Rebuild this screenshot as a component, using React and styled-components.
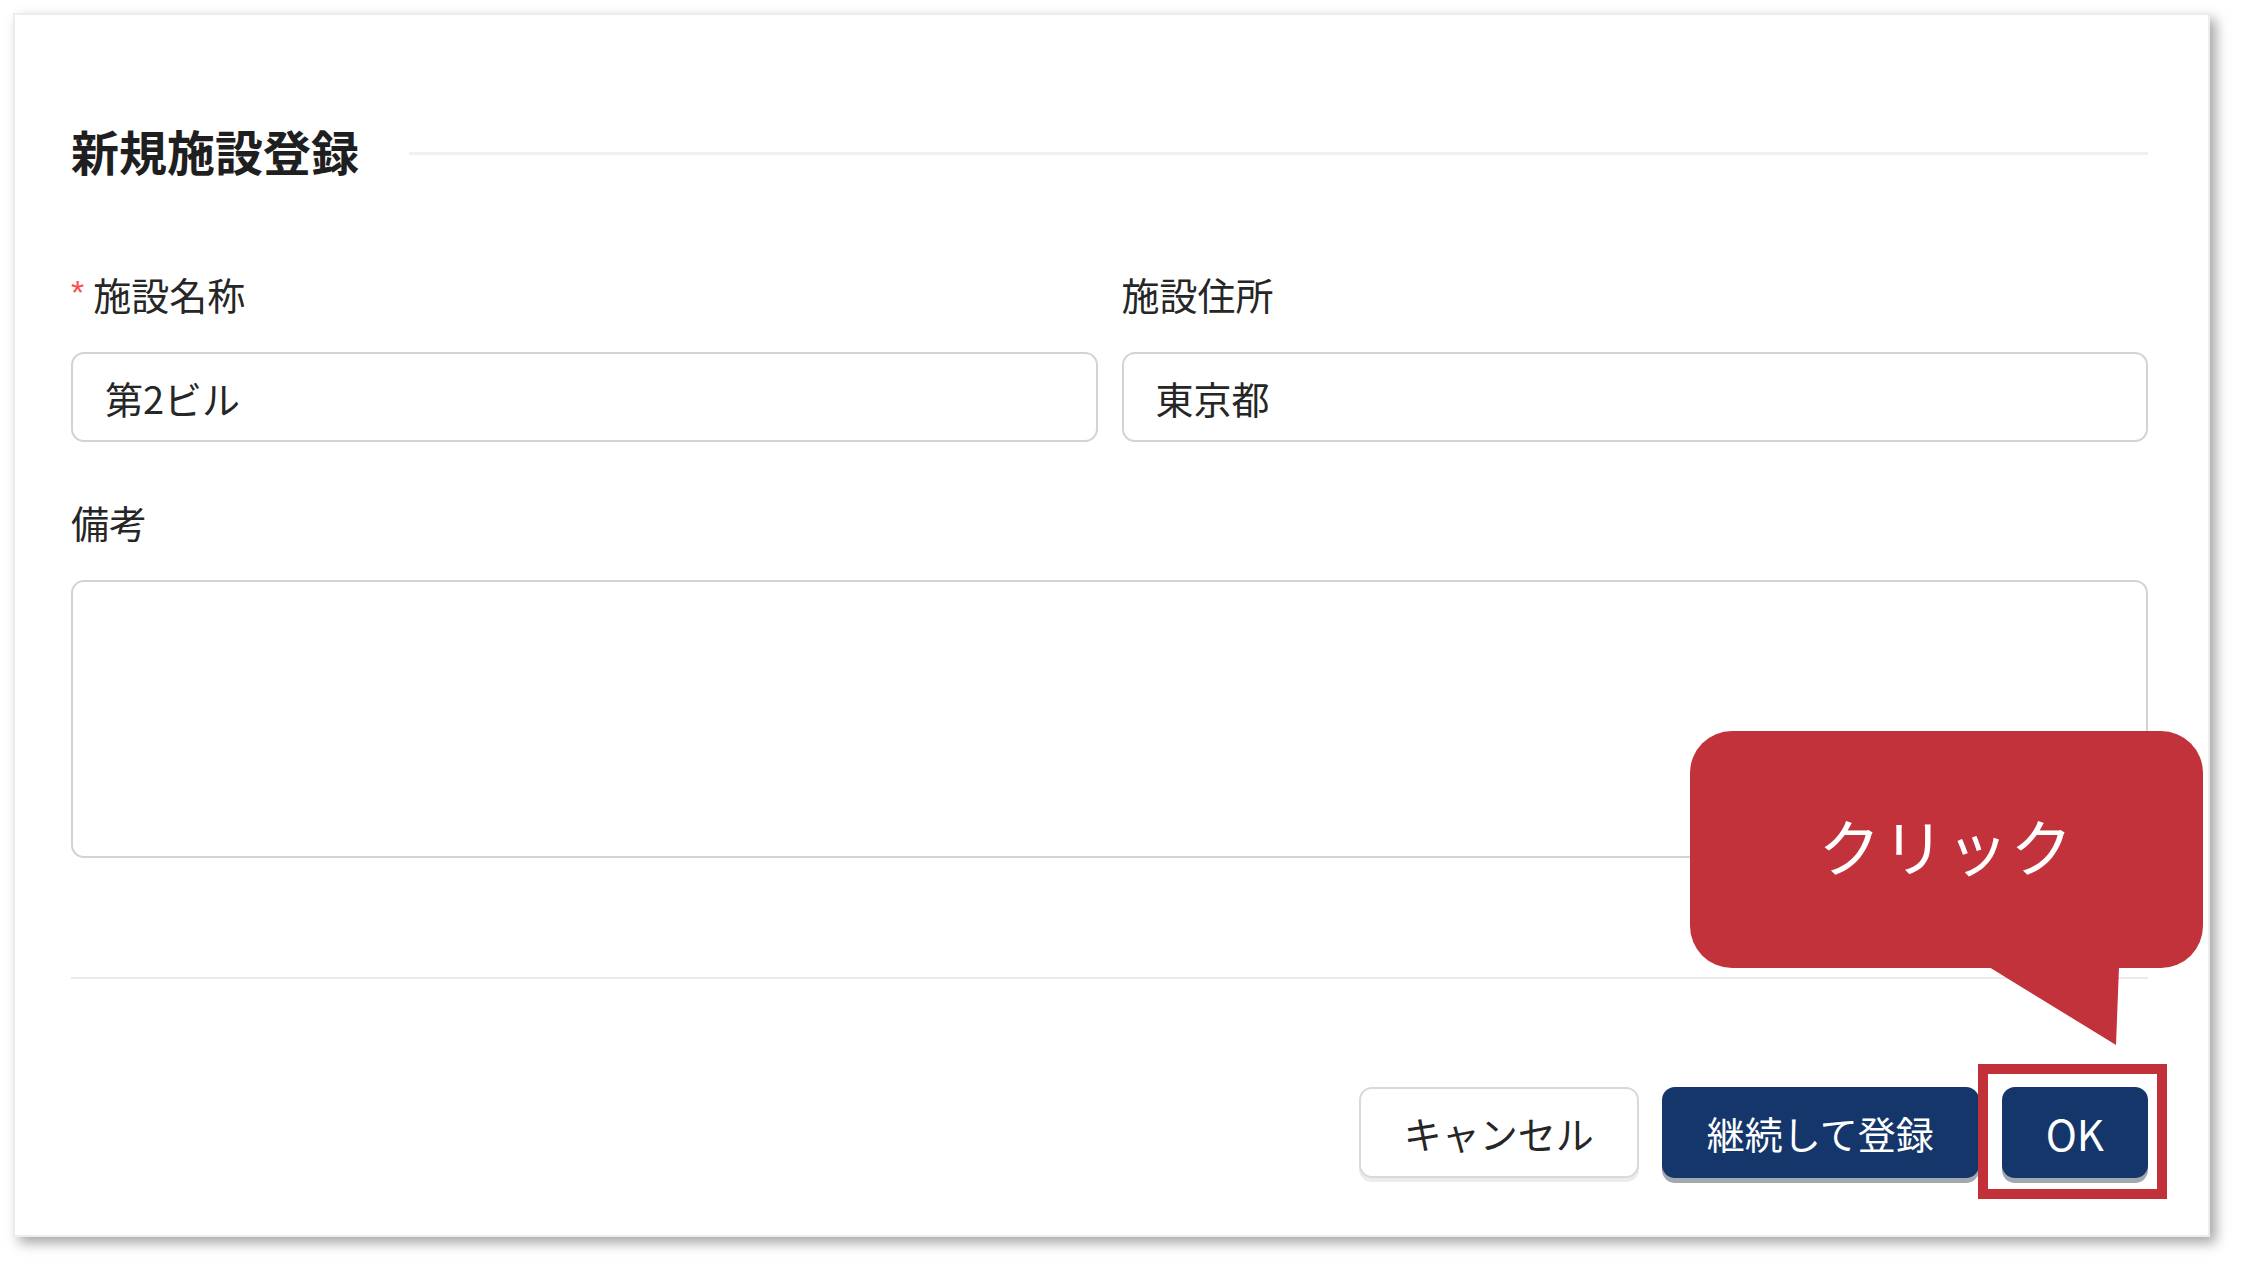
import styled, { createGlobalStyle } from "styled-components";

const GlobalStyle = createGlobalStyle`
  html, body {
    margin: 0;
    padding: 0;
    background: #ffffff;
  }
  body {
    font-family: "Noto Sans CJK JP", "Noto Sans", sans-serif;
    color: #262626;
  }
  * {
    box-sizing: border-box;
  }
`;

const Page = styled.div`
  width: 2241px;
  height: 1269px;
  padding: 13px 0 0 13px;
`;

const Card = styled.div`
  position: relative;
  width: 2197px;
  height: 1224px;
  background: #ffffff;
  border: 2px solid #ededed;
  box-shadow: 6px 6px 12px rgba(0, 0, 0, 0.35);
  padding: 102px 60px 57px 56px;
  display: flex;
  flex-direction: column;
`;

const Header = styled.div`
  display: flex;
  align-items: center;
  height: 67px;
`;

const Title = styled.h1`
  margin: 0;
  font-size: 48px;
  line-height: 67px;
  font-weight: 700;
  color: #1f1f1f;
  white-space: nowrap;
`;

const TitleRule = styled.div`
  flex: 1;
  height: 3px;
  margin-left: 50px;
  margin-top: 5px;
  background: #f0f0f0;
`;

const FieldRow = styled.div`
  display: grid;
  grid-template-columns: 1fr 1fr;
  column-gap: 24px;
  margin-top: ${(p) => p.$top}px;
`;

const Field = styled.div`
  display: flex;
  flex-direction: column;
  margin-top: ${(p) => p.$top || 0}px;
`;

const Label = styled.label`
  display: flex;
  align-items: center;
  height: 54px;
  font-size: 38px;
  line-height: 54px;
  color: #262626;
`;

const Required = styled.span`
  font-family: "Liberation Sans", Arial, sans-serif;
  color: #ff4d4f;
  font-size: 34px;
  margin-right: 9px;
  margin-top: -4px;
`;

const TextInput = styled.input`
  margin-top: 31px;
  height: 90px;
  width: 100%;
  border: 2px solid #d3d3d3;
  border-radius: 13px;
  padding: 0 32px;
  font-family: inherit;
  font-size: 38px;
  color: #262626;
  background: #ffffff;
  outline: none;
`;

const TextArea = styled.textarea`
  margin-top: 31px;
  height: 278px;
  width: 100%;
  border: 2px solid #d3d3d3;
  border-radius: 13px;
  padding: 24px 32px;
  font-family: inherit;
  font-size: 38px;
  resize: none;
  outline: none;
`;

const FooterRule = styled.div`
  height: 2px;
  margin-top: 119px;
  background: #ebebeb;
`;

const Footer = styled.div`
  display: flex;
  justify-content: flex-end;
  gap: 23px;
  margin-top: 108px;
`;

const Button = styled.button`
  position: relative;
  height: 91px;
  padding: 0 ${(p) => p.$pad || 43}px;
  border-radius: 13px;
  font-family: inherit;
  font-size: ${(p) => p.$size || 38}px;
  cursor: pointer;
  border: ${(p) => (p.$primary ? "none" : "2px solid #d9d9d9")};
  background: ${(p) => (p.$primary ? "#15366b" : "#ffffff")};
  color: ${(p) => (p.$primary ? "#ffffff" : "#262626")};
  box-shadow: ${(p) =>
    p.$primary ? "0 5px 0 #a2a8b0" : "0 4px 0 #ececec"};
`;

const Highlight = styled.span`
  position: absolute;
  top: -23px;
  left: -24px;
  right: -19px;
  bottom: -21px;
  border: 10px solid #c2313a;
  pointer-events: none;
`;

const Callout = styled.div`
  position: absolute;
  left: 1675px;
  top: 716px;
  width: 513px;
  height: 237px;
  border-radius: 42px;
  background: #c2323a;
  color: #ffffff;
  display: flex;
  align-items: center;
  justify-content: center;
  padding-bottom: 10px;
  font-size: 62px;
  letter-spacing: 2px;
`;

const Tail = styled.svg`
  position: absolute;
  left: 299px;
  top: 236px;
`;

export default function App() {
  return (
    <Page>
      <GlobalStyle />
      <Card>
        <Header>
          <Title>新規施設登録</Title>
          <TitleRule />
        </Header>

        <FieldRow $top={83}>
          <Field>
            <Label>
              <Required>*</Required>施設名称
            </Label>
            <TextInput defaultValue="第2ビル" readOnly />
          </Field>
          <Field>
            <Label>施設住所</Label>
            <TextInput defaultValue="東京都" readOnly />
          </Field>
        </FieldRow>

        <Field $top={53}>
          <Label>備考</Label>
          <TextArea readOnly />
        </Field>

        <FooterRule />

        <Footer>
          <Button $pad={43}>キャンセル</Button>
          <Button $primary $pad={45}>継続して登録</Button>
          <Button $primary $pad={44} $size={42}>
            OK
            <Highlight />
          </Button>
        </Footer>

        <Callout>
          クリック
          <Tail width="132" height="80" viewBox="0 0 132 80">
            <polygon points="0,0 130,0 127,78" fill="#c2323a" />
          </Tail>
        </Callout>
      </Card>
    </Page>
  );
}
